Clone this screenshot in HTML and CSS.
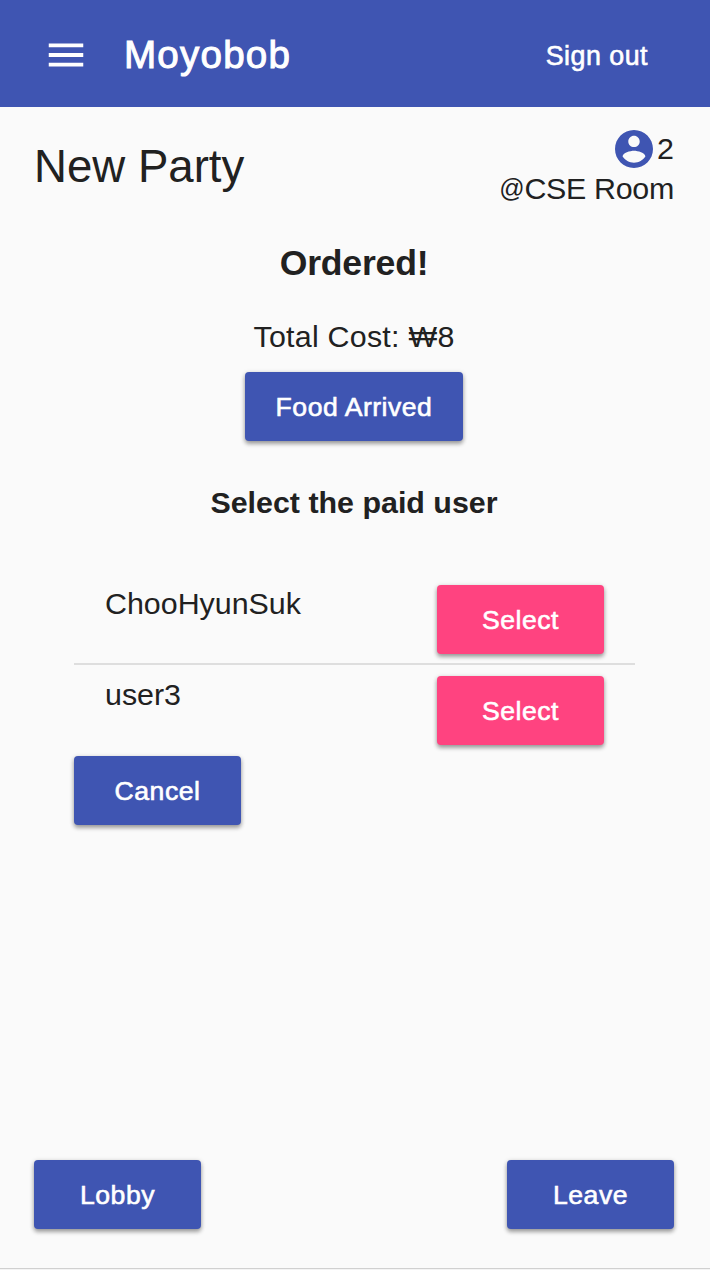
FILE: index.html
```html
<!DOCTYPE html>
<html lang="en">
<head>
<meta charset="utf-8">
<title>Moyobob</title>
<link rel="stylesheet" href="styles.css">
</head>
<body>
<div class="page">
  <header class="toolbar">
    <svg class="menu-icon" viewBox="0 0 24 24" aria-hidden="true"><path d="M3 18h18v-2H3v2zm0-5h18v-2H3v2zm0-7v2h18V6H3z"/></svg>
    <h1 class="brand">Moyobob</h1>
    <a class="sign-out">Sign out</a>
  </header>
  <main class="content">
    <section class="party-head">
      <h2 class="party-name">New Party</h2>
      <div class="party-info">
        <div class="members">
          <svg class="person-icon" viewBox="2 2 20 20" aria-hidden="true"><path d="M12 2C6.48 2 2 6.48 2 12s4.48 10 10 10 10-4.48 10-10S17.52 2 12 2zm0 3c1.66 0 3 1.34 3 3s-1.34 3-3 3-3-1.34-3-3 1.34-3 3-3zm0 14.2c-2.5 0-4.71-1.28-6-3.22.03-1.99 4-3.08 6-3.08 1.99 0 5.97 1.09 6 3.08-1.29 1.94-3.5 3.22-6 3.22z"/></svg>
          <span>2</span>
        </div>
        <div class="place"><span class="at">@</span>CSE Room</div>
      </div>
    </section>
    <section class="order">
      <h3 class="status">Ordered!</h3>
      <p class="cost">Total Cost: ₩8</p>
      <button class="button arrived">Food Arrived</button>
      <h4 class="prompt">Select the paid user</h4>
    </section>
    <section class="payers">
      <div class="payer divided"><span class="payer-name">ChooHyunSuk</span><button class="button accent">Select</button></div>
      <div class="payer"><span class="payer-name">user3</span><button class="button accent">Select</button></div>
      <button class="button">Cancel</button>
    </section>
    <footer class="actions">
      <button class="button">Lobby</button>
      <button class="button">Leave</button>
    </footer>
  </main>
</div>
</body>
</html>
```
FILE: styles.css
```css
* { box-sizing: border-box; }
body {
  margin: 0;
  background: #fff;
  color: #212121;
  font: 30.4px/40px "Liberation Sans", Arial, sans-serif;
}
h1, h2, h3, h4, p { margin: 0; font-weight: 400; }
.page {
  display: flex;
  flex-direction: column;
  width: 710px;
  height: 1270px;
  background: #fafafa;
  border-bottom: 1px solid #f4f4f4;
}
.toolbar {
  display: flex;
  align-items: center;
  height: 107px;
  padding: 3px 62px 0 43px;
  background: #3f55b2;
  color: #fff;
}
.menu-icon { width: 46px; height: 46px; fill: #fff; }
.brand {
  margin-left: 35px;
  font-size: 38.6px;
  letter-spacing: 1.2px;
  -webkit-text-stroke: 1px;
}
.sign-out {
  margin: 1px 0 0 auto;
  font-size: 26.8px;
  letter-spacing: 0.5px;
  -webkit-text-stroke: 0.6px;
}
.content {
  display: flex;
  flex: 1;
  flex-direction: column;
  padding: 21px 36px 39px 34px;
  border-bottom: 1px solid #d0d0d0;
}
.party-head { display: flex; justify-content: space-between; height: 110px; }
.party-name { margin-top: 9px; font-size: 45.6px; line-height: 60px; }
.members { display: flex; align-items: center; justify-content: flex-end; gap: 4px; }
.person-icon { width: 38px; height: 38px; margin-top: 1px; fill: #3f55b2; }
.place { text-align: right; letter-spacing: -0.3px; }
.at { font-size: 25px; line-height: 1; vertical-align: 2px; }
.order { display: flex; flex-direction: column; align-items: center; }
.status { margin-top: 5px; font-size: 35.6px; font-weight: 700; letter-spacing: -0.2px; }
.cost { margin-top: 33px; letter-spacing: 0.25px; }
.prompt { margin-top: 41px; font-weight: 700; }
.button {
  display: block;
  width: 167px;
  height: 69px;
  padding: 1px 0 0;
  border: 0;
  border-radius: 4px;
  background: #3f55b2;
  color: #fff;
  font: 26.6px/40px "Liberation Sans", Arial, sans-serif;
  letter-spacing: 0.5px;
  -webkit-text-stroke: 0.6px;
  box-shadow: 0 3px 4px rgba(0, 0, 0, 0.3), 0 1px 5px rgba(0, 0, 0, 0.18);
}
.arrived { width: 218px; margin-top: 16px; padding: 0; }
.accent { background: #ff4380; }
.payers { width: 561px; margin: 52px 0 0 40px; }
.payer {
  display: flex;
  justify-content: space-between;
  height: 91px;
  padding: 11px 31px 0 31px;
}
.payer-name { margin-top: -2px; }
.divided { border-bottom: 2px solid #dedede; }
.actions { display: flex; justify-content: space-between; margin-top: auto; }
```
